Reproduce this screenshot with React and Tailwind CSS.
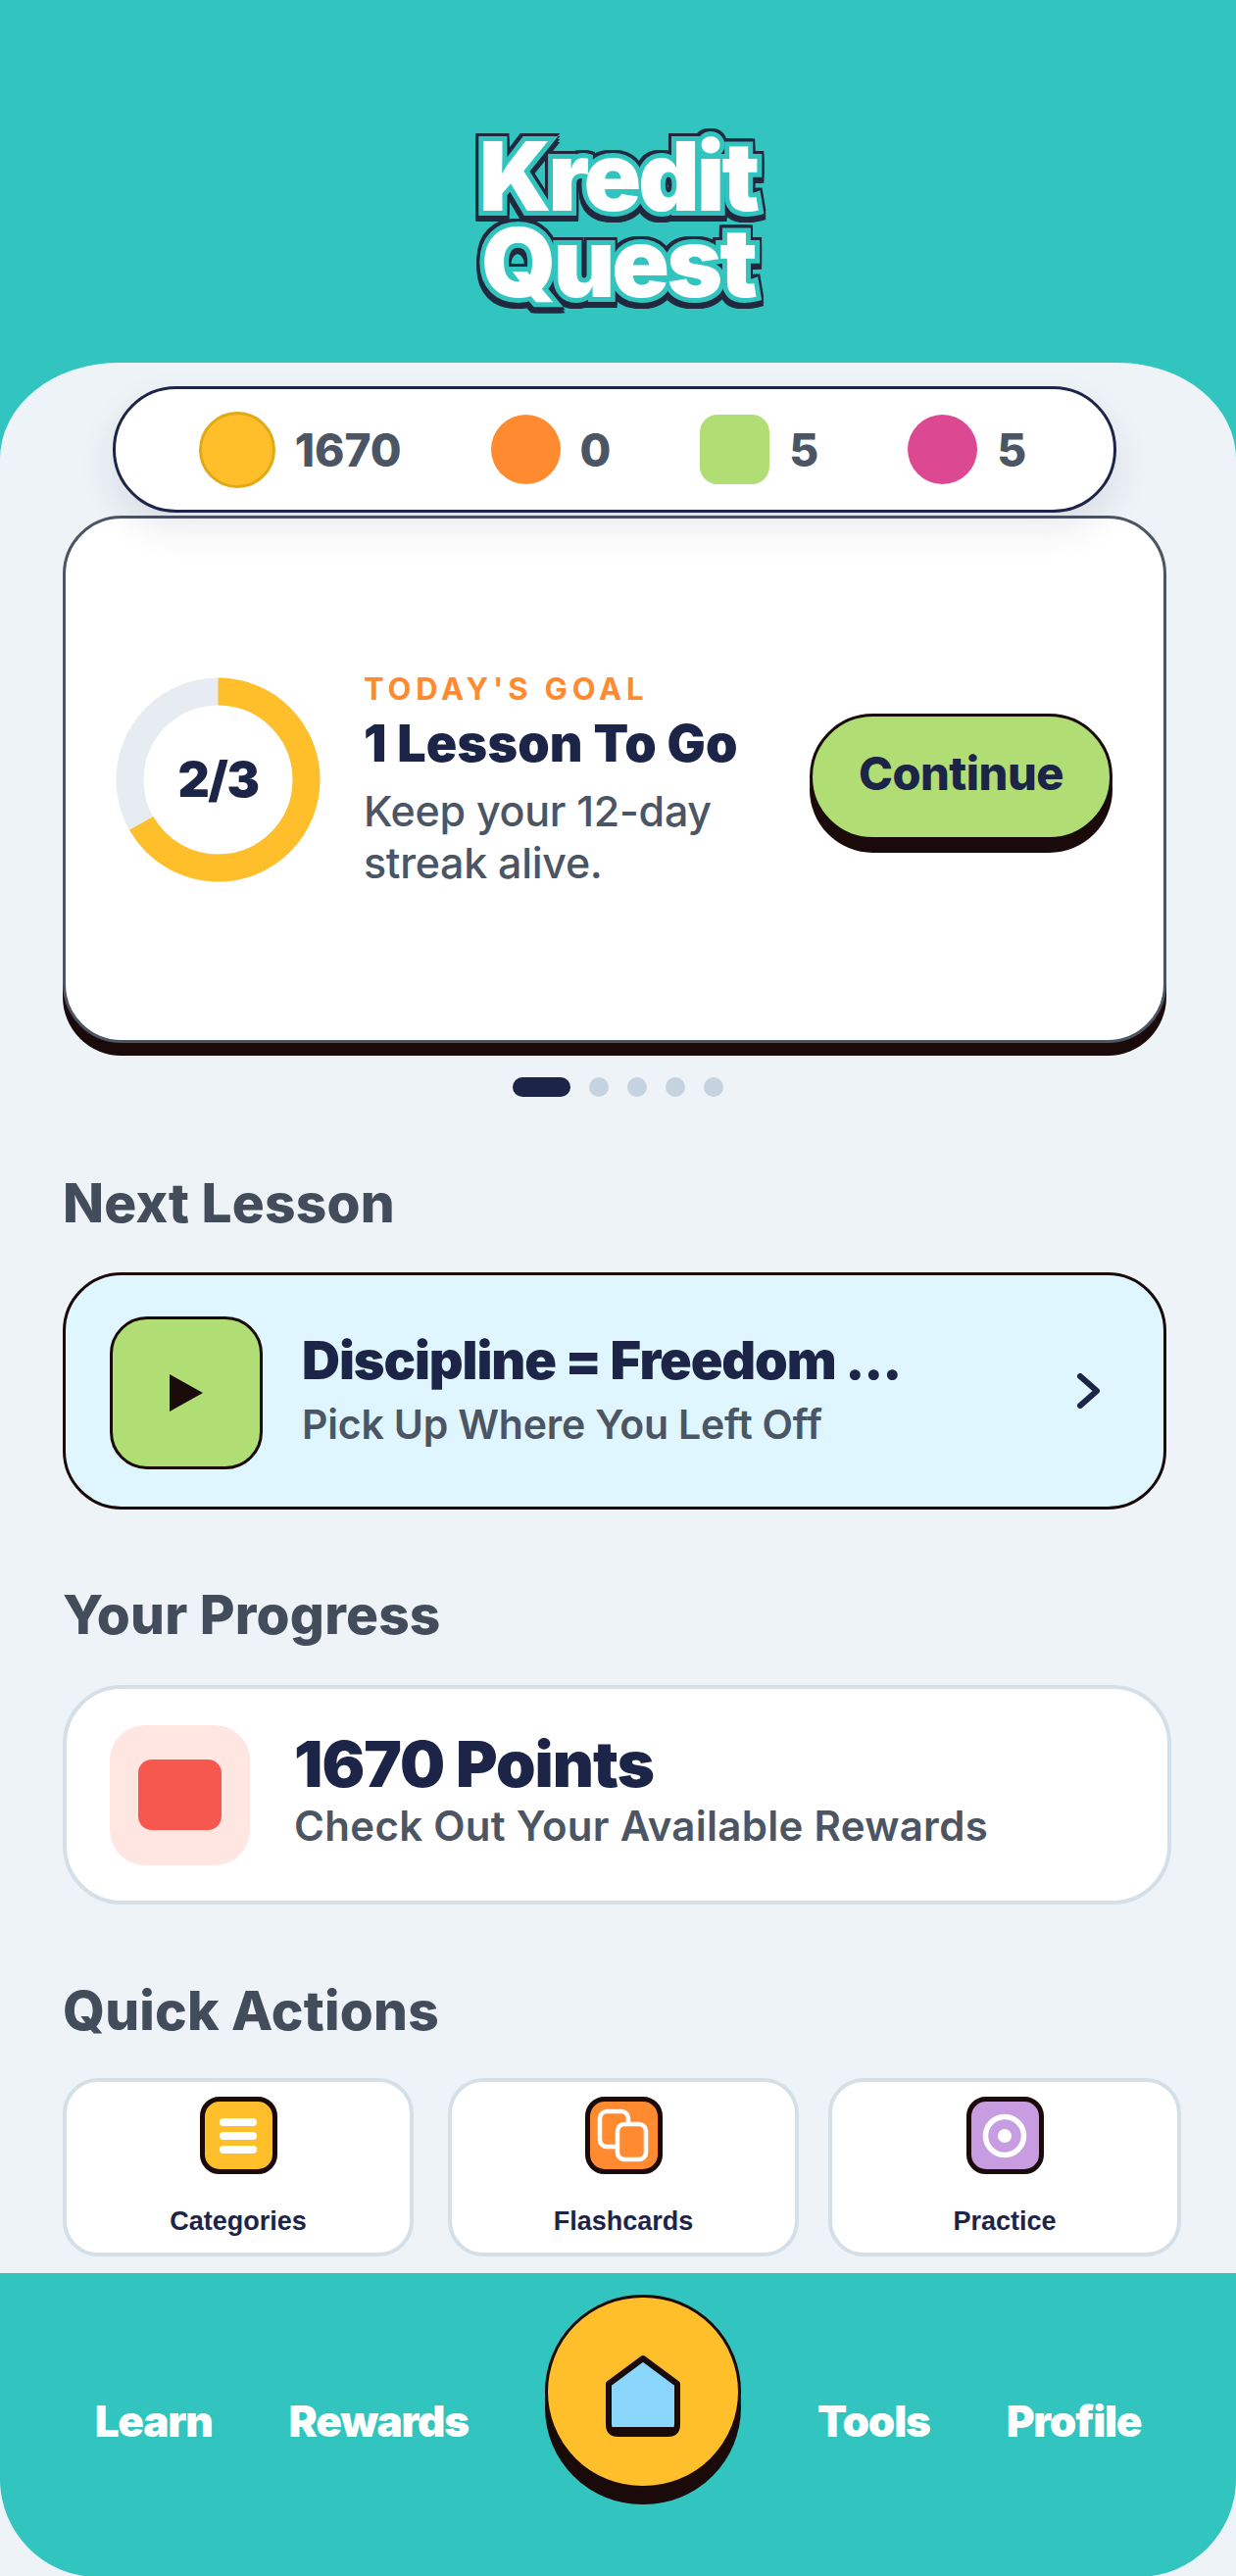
const stats = [
  { value: '1670', tile: 'w-[78px] h-[78px] rounded-full bg-[#FFBF2B] border-[3px] border-[#E2A916]' },
  { value: '0', tile: 'w-[71px] h-[71px] rounded-full bg-[#FF8A30]' },
  { value: '5', tile: 'w-[71px] h-[71px] rounded-[18px] bg-[#B0DE75]' },
  { value: '5', tile: 'w-[71px] h-[71px] rounded-full bg-[#DC4891]' },
];

function Heading({ children, className }) {
  return <h2 className={`text-[55px] leading-[60px] font-extrabold text-[#434C5B] tracking-[0.2px] ${className}`}>{children}</h2>;
}

function StatsPill() {
  return (
    <div className="relative z-10 ml-[115px] mr-[122px] h-[129px] rounded-full bg-white border-[3px] border-[#1C2447] shadow-[0_16px_36px_rgba(30,40,70,0.1)] flex items-center justify-center gap-[91px] pr-[4px]">
      {stats.map((s, i) => (
        <div key={i} className="flex items-center gap-[20px]">
          <div className={s.tile} />
          <span className="text-[46px] leading-none font-extrabold text-[#4B5563]">{s.value}</span>
        </div>
      ))}
    </div>
  );
}

function GoalCard() {
  return (
    <div className="mt-[3px] ml-[64px] mr-[71px] h-[538px] rounded-[60px] bg-white border-[3px] border-[#4B5563] shadow-[0_13px_0_#1A0A0A] flex items-center pl-[51px] pr-[52px]">
      <div className="relative w-[209px] h-[209px] shrink-0 flex items-center justify-center">
        <svg className="absolute inset-0 -rotate-90" width="209" height="209" viewBox="0 0 209 209" fill="none">
          <circle cx="104.5" cy="104.5" r="90" stroke="#E6ECF2" strokeWidth="28" />
          <circle cx="104.5" cy="104.5" r="90" stroke="#FFBF2B" strokeWidth="28" strokeDasharray="377 566" />
        </svg>
        <span className="relative text-[50px] font-black text-[#1C2447] tracking-[-1.5px]">2/3</span>
      </div>
      <div className="ml-[44px] w-[420px] shrink-0">
        <div className="text-[31px] leading-[40px] font-bold text-[#FF8A30] tracking-[4.8px]">TODAY'S GOAL</div>
        <div className="mt-[6px] text-[52px] leading-[60px] font-black text-[#1C2447] tracking-[0.2px]">1 Lesson To Go</div>
        <div className="mt-[12px] w-[400px] text-[43px] leading-[53px] font-medium text-[#4B5563] tracking-[-0.3px]">Keep your 12-day streak alive.</div>
      </div>
      <button className="ml-auto w-[309px] h-[129px] mb-[6px] rounded-full bg-[#B0DE75] border-[3px] border-[#1A0A0A] shadow-[0_13px_0_#1A0A0A] text-[47px] font-extrabold text-[#1C2447] tracking-[-0.5px] pb-[6px]">
        Continue
      </button>
    </div>
  );
}

function Dots() {
  return (
    <div className="mt-[35px] flex justify-center items-center gap-[19px] pr-[1px]">
      <div className="w-[59px] h-[20px] rounded-full bg-[#1C2447]" />
      {[0, 1, 2, 3].map(i => <div key={i} className="w-[20px] h-[20px] rounded-full bg-[#C5D2DF]" />)}
    </div>
  );
}

function NextLesson() {
  return (
    <div className="mt-[41px] ml-[64px] mr-[71px] h-[242px] rounded-[60px] bg-[#DFF6FF] border-[3px] border-[#1A0A0A] flex items-center pl-[45px] pr-[65px]">
      <div className="w-[156px] h-[156px] mt-[3px] shrink-0 rounded-[38px] bg-[#B0DE75] border-[3px] border-[#1A0A0A] flex items-center justify-center">
        <svg width="34" height="38" viewBox="0 0 34 38"><path d="M0 0 L34 19 L0 38 Z" fill="#1A0A0A" /></svg>
      </div>
      <div className="ml-[40px] flex-1">
        <div className="text-[54px] leading-[62px] font-black text-[#1C2447] tracking-[-1.1px] -mt-[4px]">Discipline = Freedom ...</div>
        <div className="mt-[9px] text-[41px] leading-[50px] font-semibold text-[#4B5563] tracking-[-0.2px]">Pick Up Where You Left Off</div>
      </div>
      <svg width="23" height="36" viewBox="0 0 23 36" fill="none">
        <path d="M3 3 L20 18 L3 33" stroke="#1C2447" strokeWidth="6" strokeLinecap="round" strokeLinejoin="round" />
      </svg>
    </div>
  );
}

function ProgressCard() {
  return (
    <div className="mt-[42px] ml-[64px] mr-[66px] h-[224px] rounded-[60px] bg-white border-[4px] border-[#D5DFE8] flex items-center pl-[44px]">
      <div className="w-[143px] h-[143px] rounded-[36px] bg-[#FFE6E1] flex items-center justify-center">
        <div className="w-[85px] h-[72px] rounded-[14px] bg-[#F6574F]" />
      </div>
      <div className="ml-[45px] -mt-[12px]">
        <div className="text-[65px] leading-[74px] font-black text-[#1C2447] tracking-[-1px]">1670 Points</div>
        <div className="mt-[2px] text-[42px] leading-[48px] font-semibold text-[#4B5563] tracking-[0.3px]">Check Out Your Available Rewards</div>
      </div>
    </div>
  );
}

function ActionIcon({ bg, children }) {
  return (
    <div className={`w-[79px] h-[79px] rounded-[20px] border-[5px] border-[#1A0A0A] flex items-center justify-center ${bg}`}>
      {children}
    </div>
  );
}

function QuickActions() {
  const actions = [
    {
      label: 'Categories',
      box: 'w-[358px]',
      icon: (
        <ActionIcon bg="bg-[#FFBF2B]">
          <div className="flex flex-col gap-[6px]">
            <div className="w-[38px] h-[8px] rounded-full bg-white" />
            <div className="w-[38px] h-[8px] rounded-full bg-white" />
            <div className="w-[38px] h-[8px] rounded-full bg-white" />
          </div>
        </ActionIcon>
      ),
    },
    {
      label: 'Flashcards',
      box: 'w-[358px]',
      icon: (
        <ActionIcon bg="bg-[#FF8A30]">
          <svg width="54" height="56" viewBox="0 0 54 56" fill="none" stroke="#fff" strokeWidth="4.5">
            <rect x="3" y="3" width="29" height="36" rx="7" />
            <rect x="21" y="16" width="29" height="36" rx="7" fill="#FF8A30" />
          </svg>
        </ActionIcon>
      ),
    },
    {
      label: 'Practice',
      box: 'w-[360px] -ml-[5px]',
      icon: (
        <ActionIcon bg="bg-[#C79CE0]">
          <svg width="46" height="46" viewBox="0 0 46 46" fill="none">
            <circle cx="23" cy="23" r="19.5" stroke="#fff" strokeWidth="5.5" />
            <circle cx="23" cy="23" r="7" fill="#fff" />
          </svg>
        </ActionIcon>
      ),
    },
  ];
  return (
    <div className="mt-[39px] ml-[64px] flex gap-[35px]">
      {actions.map(a => (
        <div key={a.label} className={`${a.box} h-[182px] rounded-[36px] bg-white border-[4px] border-[#D5DFE8] flex flex-col items-center pt-[15px]`}>
          {a.icon}
          <div className="mt-[30px] text-[27px] leading-[36px] font-bold text-[#1C2447] [font-family:'Liberation_Sans',Arial,sans-serif]">{a.label}</div>
        </div>
      ))}
    </div>
  );
}

function NavLabel({ children }) {
  return <span className="mt-[126px] text-[44px] leading-[50px] font-black text-white tracking-[-1.2px]">{children}</span>;
}

function BottomNav() {
  return (
    <nav className="mt-[16px] h-[310px] bg-[#32C4BF] rounded-b-[100px] flex justify-center items-start gap-[78px]">
      <NavLabel>Learn</NavLabel>
      <NavLabel>Rewards</NavLabel>
      <button className="mt-[22px] w-[200px] h-[198px] rounded-full bg-[#FFBF2B] border-[3px] border-[#1A0A0A] shadow-[0_16px_0_#1A0A0A] flex items-center justify-center">
        <svg className="mt-[8px]" width="78" height="84" viewBox="0 0 78 84" fill="none">
          <path d="M39 4 L74 30 V71 Q74 81 64 81 H14 Q4 81 4 71 V30 Z" fill="#8AD6FA" stroke="#1A0A0A" strokeWidth="6" strokeLinejoin="round" />
          <path d="M5 74 H73 V76 Q73 81 64 81 H14 Q5 81 5 76 Z" fill="#1A0A0A" />
        </svg>
      </button>
      <NavLabel>Tools</NavLabel>
      <NavLabel>Profile</NavLabel>
    </nav>
  );
}

export default function App() {
  return (
    <div className="w-[1261px] h-[2628px] overflow-hidden bg-[#EEF3F7] [font-family:Inter,sans-serif]">
      <div className="bg-[#32C4BF]">
        <header className="h-[370px] flex justify-center pt-[136px]">
          <h1 className="w-[340px] text-center text-[97px] leading-[88px] font-black text-white tracking-[-3px] [-webkit-text-stroke:10px_#32C4BF] [paint-order:stroke_fill] [filter:drop-shadow(2.5px_0_0_#22283D)_drop-shadow(-2.5px_0_0_#22283D)_drop-shadow(0_-2.5px_0_#22283D)_drop-shadow(0_6px_0_#22283D)]">
            Kredit Quest
          </h1>
        </header>
        <main className="bg-[#EEF3F7] rounded-tl-[120px_98px] rounded-tr-[120px_98px] pt-[24px] pb-[1px]">
          <StatsPill />
          <GoalCard />
          <Dots />
          <Heading className="mt-[78px] ml-[64px]">Next Lesson</Heading>
          <NextLesson />
          <Heading className="mt-[77px] ml-[64px]">Your Progress</Heading>
          <ProgressCard />
          <Heading className="mt-[78px] ml-[64px]">Quick Actions</Heading>
          <QuickActions />
        </main>
      </div>
      <BottomNav />
    </div>
  );
}
